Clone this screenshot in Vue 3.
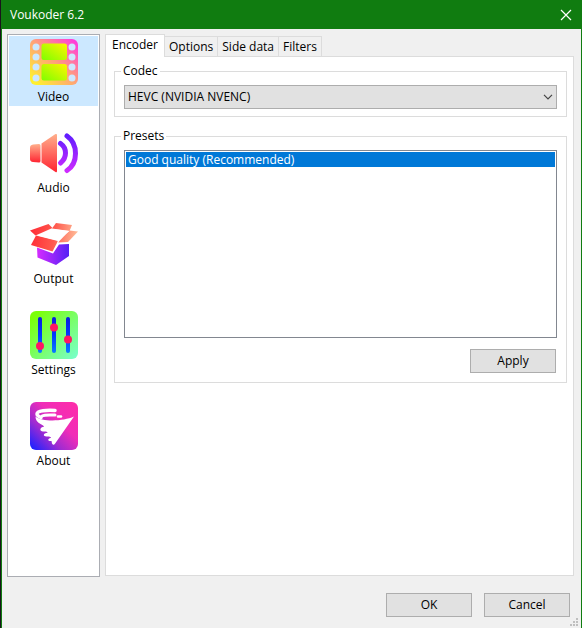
<script setup>
import { ref } from 'vue'

const pages = ['Video', 'Audio', 'Output', 'Settings', 'About']
const tabs = ['Encoder', 'Options', 'Side data', 'Filters']
const presets = ['Good quality (Recommended)']

const page = ref('Video')
const tab = ref('Encoder')
const codec = ref('hevc')
const preset = ref(presets[0])
</script>

<template>
  <div class="window">
    <header class="titlebar">
      <h1 class="title">Voukoder 6.2</h1>
      <button class="close" type="button" aria-label="Close">
        <svg width="12" height="12" viewBox="0 0 12 12">
          <path d="M1 1 11 11M11 1 1 11" stroke="#fff" stroke-width="1.2" fill="none" />
        </svg>
      </button>
    </header>

    <main class="body">
      <nav class="sidebar">
        <button
          v-for="name in pages"
          :key="name"
          type="button"
          class="page"
          :class="{ selected: page === name }"
          @click="page = name"
        >
          <svg v-if="name === 'Video'" class="icon" viewBox="0 0 48 48">
            <defs>
              <linearGradient id="film" x1="0" y1="1" x2="1" y2="0">
                <stop offset="0.08" stop-color="#fff02e" />
                <stop offset="0.5" stop-color="#ffa476" />
                <stop offset="0.95" stop-color="#ff3ddc" />
              </linearGradient>
              <linearGradient id="frame" x1="0" y1="1" x2="1" y2="0">
                <stop offset="0" stop-color="#7dff00" />
                <stop offset="1" stop-color="#fff500" />
              </linearGradient>
            </defs>
            <rect y="1" width="48" height="46" rx="6" fill="url(#film)" />
            <g fill="#cce8ff">
              <template v-for="x in [6, 42]" :key="x">
                <circle v-for="y in [9, 19, 29, 40]" :key="y" :cx="x" :cy="y" r="3.5" />
              </template>
            </g>
            <rect x="11.5" y="5.5" width="25.5" height="16.5" rx="2.5" fill="url(#frame)" />
            <rect x="11.5" y="26" width="25.5" height="16.5" rx="2.5" fill="url(#frame)" />
          </svg>

          <svg v-else-if="name === 'Audio'" class="icon" viewBox="0 0 48 48">
            <defs>
              <linearGradient id="cone" x1="0" y1="0" x2="0" y2="1">
                <stop offset="0" stop-color="#ffb08c" />
                <stop offset="1" stop-color="#ff2432" />
              </linearGradient>
              <linearGradient id="wave" gradientUnits="userSpaceOnUse" x1="0" y1="4" x2="0" y2="44">
                <stop offset="0" stop-color="#5a1cff" />
                <stop offset="1" stop-color="#d22cff" />
              </linearGradient>
            </defs>
            <path d="M3 15.5 9 15Q10.5 15 10.5 16.5V32Q10.5 33.5 9 33.5L3 33Q0 32.5 0 30V18.5Q0 16 3 15.5Z" fill="url(#cone)" />
            <path d="M11.5 14.500 25.5 5Q27 4.500 27 6V42Q27 44 25.5 43L11.5 33.5Z" fill="url(#cone)" />
            <g fill="none" stroke="url(#wave)" stroke-width="5" stroke-linecap="round">
              <path d="M30.5 14.500Q35.5 18 35.5 24T30.5 34" />
              <path d="M37 7Q45.500 13 45.500 24.500T37 41.500" />
            </g>
          </svg>

          <svg v-else-if="name === 'Output'" class="icon" viewBox="0 0 48 48">
            <defs>
              <linearGradient id="flaps" gradientUnits="userSpaceOnUse" x1="2" y1="12" x2="46" y2="18">
                <stop offset="0" stop-color="#ff3038" />
                <stop offset="0.5" stop-color="#ff594e" />
                <stop offset="1" stop-color="#ffb995" />
              </linearGradient>
              <linearGradient id="box" x1="0" y1="0.5" x2="1" y2="0.5">
                <stop offset="0" stop-color="#d52cff" />
                <stop offset="1" stop-color="#5520f5" />
              </linearGradient>
            </defs>
            <path d="M7 27.500 23 33.500 29 24.500 39 24V36L26 45 7.500 37.500Z" fill="url(#box)" />
            <g fill="url(#flaps)">
              <path d="M0 10.500 18.500 4 22.500 8 5.500 15.500Z" />
              <path d="M26 3 42 5 39.500 11 22 8.500Z" />
              <path d="M1 25 6 15.500 28 21 22.500 31.500Z" />
              <path d="M39.500 10.500 48 11.500 38 22 28 22.500Z" />
            </g>
            <path d="M7.500 15.500 22.500 9 39.500 11 27.500 20.500Z" fill="#fff" />
            <path d="M28.500 20.500 27.500 23.500" stroke="#fff" stroke-width="0.800" />
          </svg>

          <svg v-else-if="name === 'Settings'" class="icon" viewBox="0 0 48 48">
            <defs>
              <linearGradient id="panel" x1="0" y1="0" x2="1" y2="1">
                <stop offset="0.1" stop-color="#7bff0a" />
                <stop offset="1" stop-color="#78ffd0" />
              </linearGradient>
              <linearGradient id="track" gradientUnits="userSpaceOnUse" x1="0" y1="6" x2="0" y2="42">
                <stop offset="0" stop-color="#0a1cdc" />
                <stop offset="0.5" stop-color="#0038ff" />
                <stop offset="1" stop-color="#087cff" />
              </linearGradient>
            </defs>
            <rect width="48" height="48" rx="6" fill="url(#panel)" />
            <rect v-for="x in [8, 22, 36]" :key="x" :x="x" y="6" width="4" height="36" rx="2" fill="url(#track)" />
            <g fill="#ff1464">
              <circle cx="10" cy="35" r="4" />
              <circle cx="24" cy="16.5" r="4" />
              <circle cx="38" cy="28.5" r="4" />
            </g>
          </svg>

          <svg v-else class="icon" viewBox="0 0 48 48">
            <defs>
              <linearGradient id="badge" x1="0" y1="1" x2="1" y2="0">
                <stop offset="0.04" stop-color="#1e22ff" />
                <stop offset="0.34" stop-color="#a32bd0" />
                <stop offset="0.6" stop-color="#f02db8" />
                <stop offset="1" stop-color="#ff2da8" />
              </linearGradient>
            </defs>
            <rect width="48" height="48" rx="6" fill="url(#badge)" />
            <path
              d="M5.500 14.500C12 20 33 19.500 44 14.500L25.500 41C24 43.500 23 43 22 41.500C21.500 40 22.500 39 20.500 39C17 39 18 36.500 20.500 36C22 35.500 20 34.500 16.500 34.500C13 34.500 13 31.500 16.500 31C19 30.500 17 29.500 13 29.500C9.500 29.500 9.500 25.500 13 25C15.500 24.500 13 23.500 10.500 22C7 20 5.500 17.500 5.500 14.500Z"
              fill="#fff"
            />
            <g fill="none" stroke="#fff" stroke-linecap="round">
              <path d="M25 8.500C17 8 7 8.500 7 12C7 13.500 8.500 14.500 11 15.500" stroke-width="3.500" />
              <path d="M12 14C15 12.500 19 13 25 13" stroke-width="3" />
              <path d="M28 14.500H31" stroke-width="2.500" />
            </g>
          </svg>
          <span>{{ name }}</span>
        </button>
      </nav>

      <section class="content">
        <div class="tabs" role="tablist">
          <button
            v-for="name in tabs"
            :key="name"
            type="button"
            role="tab"
            class="tab"
            :class="{ active: tab === name }"
            :aria-selected="tab === name"
            @click="tab = name"
          >{{ name }}</button>
        </div>

        <div class="panel" role="tabpanel">
          <fieldset class="group">
            <legend><label for="codec">Codec</label></legend>
            <div class="combo">
              <select id="codec" v-model="codec">
                <option value="hevc">HEVC (NVIDIA NVENC)</option>
              </select>
              <svg class="chevron" width="10" height="6" viewBox="0 0 10 6">
                <path d="M1 0.8 5 4.8 9 0.8" fill="none" stroke="#444" stroke-width="1.2" />
              </svg>
            </div>
          </fieldset>

          <fieldset class="group">
            <legend id="presets-label">Presets</legend>
            <div class="list" role="listbox" aria-labelledby="presets-label">
              <button
                v-for="name in presets"
                :key="name"
                type="button"
                role="option"
                class="option"
                :class="{ chosen: preset === name }"
                :aria-selected="preset === name"
                @click="preset = name"
              >{{ name }}</button>
            </div>
            <div class="actions">
              <button class="push" type="button">Apply</button>
            </div>
          </fieldset>
        </div>
      </section>
    </main>

    <footer class="footer">
      <button class="push" type="button">OK</button>
      <button class="push" type="button">Cancel</button>
      <svg class="grip" width="8" height="8" viewBox="0 0 8 8" fill="#bfbfbf">
        <path d="M6 0h2v2H6zM3 3h2v2H3zM6 3h2v2H6zM0 6h2v2H0zM3 6h2v2H3zM6 6h2v2H6z" />
      </svg>
    </footer>
  </div>
</template>

<style>
body {
  margin: 0;
  background: #1a141c;
}
</style>

<style scoped>
.window {
  box-sizing: border-box;
  min-height: 100vh;
  margin-left: 1px;
  display: flex;
  flex-direction: column;
  border: solid #107c10;
  border-width: 0 1px;
  background: #f0f0f0;
  color: #000;
  font: 12px/16px "Open Sans", "Noto Sans", sans-serif;
}

button,
select {
  box-sizing: border-box;
  margin: 0;
  padding: 0;
  border: 0;
  border-radius: 0;
  background: none;
  color: inherit;
  font: inherit;
}

.titlebar {
  display: flex;
  align-items: center;
  justify-content: space-between;
  height: 29px;
  padding-left: 8px;
  background: #107c10;
  color: #fff;
}

.title {
  margin: 0;
  font: inherit;
}

.close {
  display: grid;
  place-items: center;
  width: 30px;
  height: 28px;
}

.body {
  flex: 1;
  display: flex;
  gap: 5px;
  padding: 5px 7px 0 5px;
}

.sidebar {
  box-sizing: border-box;
  width: 93px;
  padding: 1px;
  border: 1px solid #abadb3;
  background: #fff;
  display: flex;
  flex-direction: column;
  gap: 21px;
}

.page {
  display: flex;
  flex-direction: column;
  align-items: center;
  gap: 3px;
  height: 70px;
  padding-top: 2px;
}

.page.selected {
  background: #cce8ff;
}

.icon {
  width: 48px;
  height: 48px;
  flex: none;
}

.content {
  flex: 1;
  min-width: 0;
  display: flex;
  flex-direction: column;
  padding-bottom: 1px;
}

.tabs {
  display: flex;
  align-items: flex-end;
  height: 22px;
}

.tab {
  height: 20px;
  padding: 0 4px;
  border: 1px solid #dcdcdc;
  border-width: 1px 1px 0 0;
}

.tab.active {
  z-index: 1;
  height: 23px;
  margin-bottom: -1px;
  padding: 0 6px 2px;
  border-left-width: 1px;
  background: #fff;
}

.panel {
  flex: 1;
  display: flex;
  flex-direction: column;
  gap: 11px;
  padding: 6px 6px 0 8px;
  border: 1px solid #dcdcdc;
  background: #fff;
}

.group {
  min-width: 0;
  margin: 0;
  padding: 6px 9px 7px;
  border: 1px solid #dcdcdc;
}

legend {
  margin-left: -3px;
  padding: 0 2px;
}

.combo {
  position: relative;
  display: flex;
}

.combo select {
  flex: 1;
  height: 24px;
  padding: 0 24px 0 3px;
  border: 1px solid #adadad;
  background: #e1e1e1;
  appearance: none;
}

.chevron {
  position: absolute;
  right: 4px;
  top: 9px;
  pointer-events: none;
}

.list {
  box-sizing: border-box;
  height: 188px;
  padding: 1px;
  border: 1px solid #828790;
  background: #fff;
}

.option {
  display: block;
  width: 100%;
  height: 15px;
  padding-left: 2px;
  line-height: 15px;
  text-align: left;
}

.option.chosen {
  background: #0078d7;
  color: #fff;
}

.actions {
  display: flex;
  justify-content: flex-end;
  padding: 11px 1px 2px 0;
}

.push {
  width: 86px;
  height: 24px;
  border: 1px solid #adadad;
  background: #e1e1e1;
}

.footer {
  position: relative;
  display: flex;
  justify-content: flex-end;
  gap: 12px;
  padding: 16px 11px 11px;
}

.grip {
  position: absolute;
  right: 3px;
  bottom: 2px;
}
</style>
